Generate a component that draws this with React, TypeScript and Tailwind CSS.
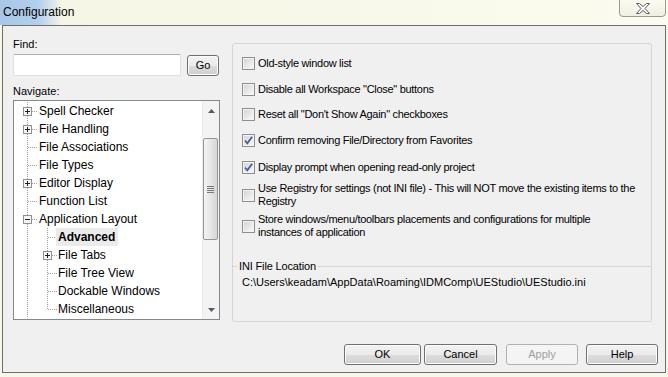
import React from "react";

interface TreeItem {
    label: string;
    level: 1 | 2;
    exp?: "+" | "-";
    selected?: boolean;
    last?: boolean;
}

const treeItems: TreeItem[] = [
    { label: "Spell Checker", level: 1, exp: "+" },
    { label: "File Handling", level: 1, exp: "+" },
    { label: "File Associations", level: 1 },
    { label: "File Types", level: 1 },
    { label: "Editor Display", level: 1, exp: "+" },
    { label: "Function List", level: 1 },
    { label: "Application Layout", level: 1, exp: "-" },
    { label: "Advanced", level: 2, selected: true },
    { label: "File Tabs", level: 2, exp: "+" },
    { label: "File Tree View", level: 2 },
    { label: "Dockable Windows", level: 2 },
    { label: "Miscellaneous", level: 2, last: true },
];

const options = [
    { label: "Old-style window list", checked: false },
    { label: "Disable all Workspace \"Close\" buttons", checked: false },
    { label: "Reset all \"Don't Show Again\" checkboxes", checked: false },
    { label: "Confirm removing File/Directory from Favorites", checked: true },
    { label: "Display prompt when opening read-only project", checked: true },
];

function Expander({ cx, sign }: { cx: number; sign: "+" | "-" }) {
    const x = cx - 4;
    return (
        <g shapeRendering="crispEdges">
            <rect x={x + 0.5} y={5.5} width={8} height={8} fill="#f4f4f4" stroke="#919191" />
            <line x1={x + 2} y1={9.5} x2={x + 7} y2={9.5} stroke="#222" />
            {sign === "+" && <line x1={cx + 0.5} y1={7} x2={cx + 0.5} y2={12} stroke="#222" />}
        </g>
    );
}

function Guide({ item }: { item: TreeItem }) {
    const w = item.level === 1 ? 25 : 44;
    const dot = { stroke: "#a0a0a0", strokeDasharray: "1 1", shapeRendering: "crispEdges" as const };
    return (
        <svg width={w} height={18} className="shrink-0">
            <line x1={13.5} y1={0} x2={13.5} y2={18} {...dot} />
            {item.level === 1 && <line x1={14} y1={9.5} x2={24} y2={9.5} {...dot} />}
            {item.level === 2 && (
                <>
                    <line x1={33.5} y1={0} x2={33.5} y2={item.last ? 10 : 18} {...dot} />
                    <line x1={34} y1={9.5} x2={43} y2={9.5} {...dot} />
                </>
            )}
            {item.exp && <Expander cx={item.level === 1 ? 13 : 33} sign={item.exp} />}
        </svg>
    );
}

function Checkbox({ checked }: { checked: boolean }) {
    return (
        <span className="relative w-[13px] h-[13px] shrink-0 border border-[#8e8f8f] bg-[#f4f4f4] flex items-center justify-center">
            <span className="w-[9px] h-[9px] bg-[linear-gradient(135deg,#d3d6da,#f7f7f7)]" />
            {checked && (
                <svg width={11} height={11} viewBox="0 0 11 11" className="absolute left-0 top-0">
                    <path d="M2 5.5 L4.3 8.3 L9.2 1.8" fill="none" stroke="#4a5d90" strokeWidth={1.8} />
                </svg>
            )}
        </span>
    );
}

function Button({ label, width, disabled, className }: { label: string; width: string; disabled?: boolean; className?: string }) {
    return (
        <button
            className={`${width} h-[21px] rounded-[3px] border text-[11px] leading-none flex items-center justify-center ${
                disabled
                    ? "border-[#adb2b5] bg-[#f4f4f4] text-[#a0a0a0]"
                    : "border-[#707070] bg-[linear-gradient(#f2f2f2_0%,#ebebeb_50%,#dddddd_51%,#cfcfcf_100%)] text-black shadow-[inset_0_0_0_1px_#fcfcfc]"
            } ${className ?? ""}`}
        >
            {label}
        </button>
    );
}

export default function App() {
    return (
        <div className="w-[668px] h-[377px] overflow-hidden bg-[#f8f8ea] font-['Liberation_Sans',Arial,sans-serif] text-black">
            {/* title bar */}
            <div className="h-[25px] flex justify-between bg-[linear-gradient(90deg,#a7c6e8_0px,#b3cfec_38px,#f6f6e6_62px,#fbfbef_100%)]">
                <div className="pl-[3px] pt-[5px] text-[12px] leading-[15px]">Configuration</div>
                <div className="mr-[2px] -mt-px w-[47px] h-[18px] rounded-b-[4px] border border-[#9a9a92] bg-[linear-gradient(#fbfbf2,#efefe2)] flex items-center justify-center">
                    <svg width={14} height={11} viewBox="0 0 14 11">
                        <polygon
                            points="0.5,0.5 3.5,0.5 7,3.5 10.5,0.5 13.5,0.5 9,5.5 13.5,10.5 10.5,10.5 7,7.5 3.5,10.5 0.5,10.5 5,5.5"
                            fill="#fafafa"
                            stroke="#5e5e5e"
                            strokeWidth={1}
                        />
                    </svg>
                </div>
            </div>

            {/* content */}
            <div className="ml-[2px] w-[664px] h-[348px] border border-[#6e6e6e] bg-[#f0f0f0] flex flex-col pt-[11px]">
                <div className="flex items-start">
                    {/* left column */}
                    <div className="ml-[10px] w-[207px] flex flex-col">
                        <div className="h-[14px] text-[11px] leading-[14px]">Find:</div>
                        <div className="mt-[3px] flex items-start">
                            <div className="w-[168px] h-[22px] rounded-[2px] border border-[#dbdfe6] border-t-[#abadb3] bg-white" />
                            <Button label="Go" width="w-[32px]" className="ml-[6px] mt-px" />
                        </div>
                        <div className="mt-[8px] h-[14px] text-[11px] leading-[14px]">Navigate:</div>
                        <div className="mt-[2px] h-[220px] border border-[#828790] bg-white flex">
                            <div className="flex-1 overflow-hidden pt-px">
                                {treeItems.map((item) => (
                                    <div key={item.label} className="h-[18px] flex items-center">
                                        <Guide item={item} />
                                        <span
                                            className={`text-[12px] leading-[18px] whitespace-nowrap ${
                                                item.selected ? "font-bold bg-[#ebebeb] pl-[2px] pr-[3px] -ml-[2px]" : ""
                                            }`}
                                        >
                                            {item.label}
                                        </span>
                                    </div>
                                ))}
                            </div>
                            {/* scrollbar */}
                            <div className="w-[17px] flex flex-col bg-[#f3f3f3] border-l border-[#ebebeb]">
                                <div className="h-[17px] flex items-center justify-center pt-[3px]">
                                    <svg width={7} height={4}><polygon points="3.5,0 7,4 0,4" fill="#5a5a5a" /></svg>
                                </div>
                                <div className="flex-1">
                                    <div className="mt-[20px] w-[15px] h-[102px] rounded-[2px] border border-[#959595] bg-[linear-gradient(90deg,#f4f4f4,#e6e6e6_50%,#d6d6d6)] flex flex-col items-center justify-center gap-px">
                                        <span className="w-[7px] h-px bg-[#7a7a7a]" />
                                        <span className="w-[7px] h-px bg-[#7a7a7a]" />
                                        <span className="w-[7px] h-px bg-[#7a7a7a]" />
                                        <span className="w-[7px] h-px bg-[#7a7a7a]" />
                                    </div>
                                </div>
                                <div className="h-[17px] flex items-center justify-center pb-[1px]">
                                    <svg width={7} height={4}><polygon points="0,0 7,0 3.5,4" fill="#5a5a5a" /></svg>
                                </div>
                            </div>
                        </div>
                    </div>

                    {/* right panel */}
                    <div className="mt-[6px] ml-[12px] w-[420px] h-[279px] rounded-[3px] border border-[#d5d5d5] flex flex-col text-[11px] leading-[13px]">
                        <div className="pl-[9px] pt-[13px] flex flex-col tracking-[-0.3px] whitespace-nowrap">
                            {options.map((o, i) => (
                                <div
                                    key={o.label}
                                    className={`h-[13px] flex items-center gap-[3px] ${
                                        i === 0 ? "" : i === 2 ? "mt-[12px]" : i === 4 ? "mt-[14px]" : "mt-[13px]"
                                    }`}
                                >
                                    <Checkbox checked={o.checked} />
                                    <span>{o.label}</span>
                                </div>
                            ))}
                            <div className="mt-[8px] flex items-center gap-[3px]">
                                <Checkbox checked={false} />
                                <span>
                                    Use Registry for settings (not INI file) - This will NOT move the existing items to the
                                    <br />
                                    Registry
                                </span>
                            </div>
                            <div className="mt-[5px] flex items-center gap-[3px]">
                                <Checkbox checked={false} />
                                <span>
                                    Store windows/menu/toolbars placements and configurations for multiple
                                    <br />
                                    instances of application
                                </span>
                            </div>
                        </div>
                        <fieldset className="mt-[21px] m-0 p-0 min-w-0 border-0 border-t border-[#d5d5d5]">
                            <legend className="ml-[4px] px-[2px] leading-[13px] tracking-[-0.15px]">INI File Location</legend>
                            <div className="mt-[3px] pl-[9px]">C:\Users\keadam\AppData\Roaming\IDMComp\UEStudio\UEStudio.ini</div>
                        </fieldset>
                    </div>
                </div>

                {/* buttons */}
                <div className="mt-[22px] flex justify-end pr-[7px]">
                    <Button label="OK" width="w-[77px]" />
                    <Button label="Cancel" width="w-[73px]" className="ml-[3px]" />
                    <Button label="Apply" width="w-[72px]" className="ml-[9px]" disabled />
                    <Button label="Help" width="w-[72px]" className="ml-[8px]" />
                </div>
            </div>
        </div>
    );
}
